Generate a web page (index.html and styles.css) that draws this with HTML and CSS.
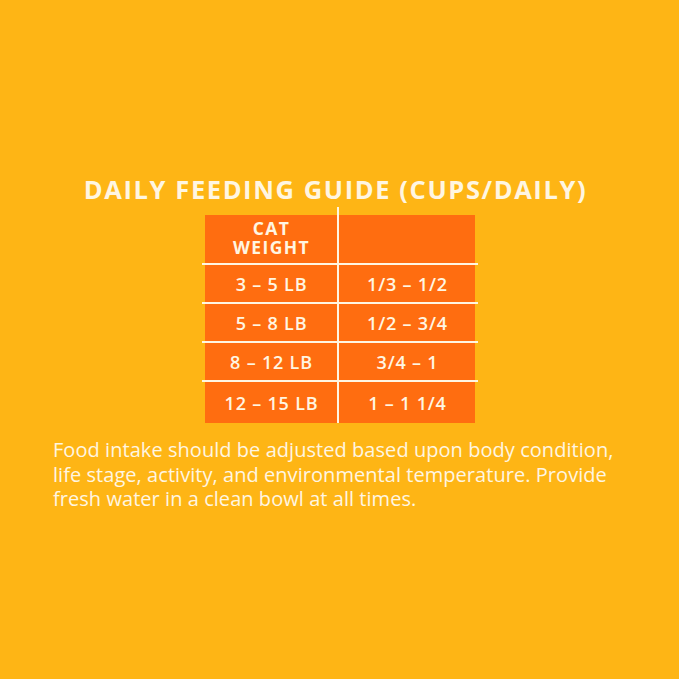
FILE: index.html
```html
<!DOCTYPE html>
<html>
<head>
<meta charset="utf-8">
<link rel="stylesheet" href="styles.css">
</head>
<body>
<div class="page">
  <h1 class="title">DAILY FEEDING GUIDE (CUPS/DAILY)</h1>
  <div class="guide">
    <div class="row head">
      <div class="cell left">CAT<br>WEIGHT</div>
      <div class="cell right"></div>
    </div>
    <div class="row">
      <div class="cell left">3 – 5 LB</div>
      <div class="cell right">1/3 – 1/2</div>
    </div>
    <div class="row">
      <div class="cell left">5 – 8 LB</div>
      <div class="cell right">1/2 – 3/4</div>
    </div>
    <div class="row">
      <div class="cell left">8 – 12 LB</div>
      <div class="cell right">3/4 – 1</div>
    </div>
    <div class="row last">
      <div class="cell left">12 – 15 LB</div>
      <div class="cell right">1 – 1 1/4</div>
    </div>
  </div>
  <p class="note">Food intake should be adjusted based upon body condition, life stage, activity, and environmental temperature. Provide fresh water in a clean bowl at all times.</p>
</div>
</body>
</html>
```
FILE: styles.css
```css
html, body {
  margin: 0;
  padding: 0;
}
body {
  background: #feb515;
  width: 679px;
  height: 679px;
  overflow: hidden;
  font-family: "Open Sans", "Liberation Sans", sans-serif;
  color: #fff6e2;
}
.page {
  display: flex;
  flex-direction: column;
  align-items: center;
  padding-top: 172px;
}
.title {
  margin: 0 0 0 -8px;
  font-size: 25.5px;
  line-height: 34px;
  font-weight: 700;
  letter-spacing: 1.6px;
  color: #fff6e2;
}
.guide {
  position: relative;
  width: 276px;
  margin-top: 9px;
  margin-left: 1px;
}
.guide::before {
  content: "";
  position: absolute;
  left: 135px;
  top: -8px;
  bottom: 0;
  width: 2px;
  background: #fff6e2;
}
.row {
  display: grid;
  grid-template-columns: 133px 2px 135px;
  padding: 0 3px;
  height: 37px;
  border-bottom: 2px solid #fff6e2;
}
.row.head {
  height: 48px;
}
.row.last {
  height: 41px;
  border-bottom: 0;
}
.cell {
  background: #ff6d10;
  display: flex;
  align-items: center;
  justify-content: center;
  text-align: center;
  font-size: 18px;
  font-weight: 600;
  line-height: 20px;
  letter-spacing: 0.8px;
}
.cell.left {
  grid-column: 1;
}
.cell.right {
  grid-column: 3;
}
.row .left {
  box-shadow: 2px 0 0 #ff6d10;
}
.head .cell {
  font-weight: 700;
  font-size: 17.5px;
  line-height: 19px;
  letter-spacing: 1.4px;
  padding-bottom: 2px;
}
.note {
  align-self: flex-start;
  width: 570px;
  margin: 15px 0 0 53px;
  font-size: 20px;
  line-height: 24.5px;
  font-weight: 400;
  letter-spacing: 0.05px;
  color: #fff6e2;
}
```
